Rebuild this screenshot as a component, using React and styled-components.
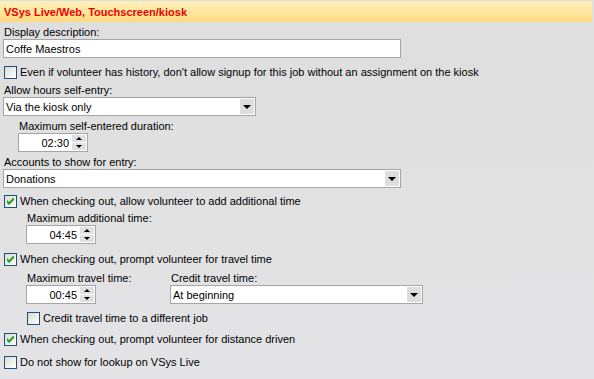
import React from 'react'
import styled, { createGlobalStyle } from 'styled-components'

const Global = createGlobalStyle`
  html, body {
    margin: 0;
    padding: 0;
  }
  body {
    width: 594px;
    height: 379px;
    overflow: hidden;
    font-family: "Liberation Sans", Arial, sans-serif;
    font-size: 11px;
    color: #000;
    background: linear-gradient(180deg, #dedede 0%, #e4e4e6 100%);
  }
`

const Panel = styled.div`
  display: flex;
  flex-direction: column;
  width: 594px;
  height: 379px;
`

const Header = styled.div`
  margin-top: 1px;
  width: 592px;
  height: 21px;
  display: flex;
  align-items: center;
  padding-left: 4px;
  box-sizing: border-box;
  background: linear-gradient(180deg, #fff0bc 0%, #ffe7a0 50%, #ffd97c 100%);
  color: #ee0000;
  font-weight: bold;
  font-size: 11px;
`

const Body = styled.div`
  display: flex;
  flex-direction: column;
  padding-left: 3px;
`

const Label = styled.div`
  height: 13px;
  line-height: 13px;
  margin-top: ${({ $top }) => $top || 0}px;
  margin-left: ${({ $indent }) => ($indent || 0) + 1}px;
`

const TextBox = styled.div`
  width: ${({ $w }) => $w}px;
  height: 19px;
  box-sizing: border-box;
  border: 1px solid #a5a5a5;
  background: #fff;
  display: flex;
  align-items: center;
  padding-left: 2px;
`

const Select = styled.div`
  width: ${({ $w }) => $w}px;
  height: 19px;
  box-sizing: border-box;
  border: 1px solid #a5a5a5;
  background: #fff;
  display: flex;
  align-items: center;
  justify-content: space-between;
  padding: 1px;
  padding-left: 2px;
`

const DropBtn = styled.div`
  width: 14px;
  height: 15px;
  background: #dedede;
  display: flex;
  align-items: center;
  justify-content: center;
`

const Arrow = styled.div`
  width: 0;
  height: 0;
  border-left: 4px solid transparent;
  border-right: 4px solid transparent;
  border-${({ $up }) => ($up ? 'bottom' : 'top')}: 4px solid #000;
`

const Spin = styled.div`
  width: 70px;
  height: 19px;
  box-sizing: border-box;
  border: 1px solid #a5a5a5;
  background: #fff;
  display: flex;
  align-items: center;
  margin-left: ${({ $indent }) => $indent || 0}px;
`

const SpinValue = styled.div`
  flex: 1;
  text-align: right;
  padding-right: 3px;
`

const SpinBtns = styled.div`
  width: 14px;
  height: 15px;
  display: flex;
  flex-direction: column;
  gap: 1px;
  margin-right: 1px;
`

const SpinBtn = styled.div`
  flex: 1;
  background: #e0e0e0;
  display: flex;
  align-items: center;
  justify-content: center;
  ${Arrow} {
    border-left-width: 3px;
    border-right-width: 3px;
    border-top-width: 3px;
    border-bottom-width: 3px;
  }
`

const CheckRow = styled.label`
  display: flex;
  align-items: center;
  height: 14px;
  margin-top: ${({ $top }) => $top || 0}px;
  margin-left: ${({ $indent }) => ($indent || 0) + 1}px;
`

const Box = styled.span`
  width: 13px;
  height: 13px;
  box-sizing: border-box;
  border: 1px solid #1c5180;
  background: linear-gradient(135deg, #dcdcd6 0%, #f4f4f0 70%, #ffffff 100%);
  display: flex;
  align-items: center;
  justify-content: center;
  margin-right: 3px;
  flex-shrink: 0;
`

const Columns = styled.div`
  display: flex;
  margin-left: 23px;
  margin-top: 6px;
`

const Column = styled.div`
  display: flex;
  flex-direction: column;
  width: ${({ $w }) => $w}px;
`

const Check = ({ checked, children, top, indent }) => (
  <CheckRow $top={top} $indent={indent}>
    <Box>
      {checked && (
        <svg width="7" height="7" viewBox="0 0 7 7">
          <path d="M0 2 L2 4 L7 -1 L7 2 L2 7 L0 5 Z" fill="#21a121" />
        </svg>
      )}
    </Box>
    {children}
  </CheckRow>
)

const Dropdown = ({ w, value }) => (
  <Select $w={w}>
    <span>{value}</span>
    <DropBtn>
      <Arrow />
    </DropBtn>
  </Select>
)

const TimeSpin = ({ value, indent }) => (
  <Spin $indent={indent}>
    <SpinValue>{value}</SpinValue>
    <SpinBtns>
      <SpinBtn><Arrow $up /></SpinBtn>
      <SpinBtn><Arrow /></SpinBtn>
    </SpinBtns>
  </Spin>
)

export default function App() {
  return (
    <Panel>
      <Global />
      <Header>VSys Live/Web, Touchscreen/kiosk</Header>
      <Body>
        <Label $top={4}>Display description:</Label>
        <TextBox $w={398}>Coffe Maestros</TextBox>
        <Check top={7}>Even if volunteer has history, don't allow signup for this job without an assignment on the kiosk</Check>
        <Label $top={5}>Allow hours self-entry:</Label>
        <Dropdown w={253} value="Via the kiosk only" />
        <Label $top={4} $indent={15}>Maximum self-entered duration:</Label>
        <TimeSpin indent={15} value="02:30" />
        <Label $top={4}>Accounts to show for entry:</Label>
        <Dropdown w={398} value="Donations" />
        <Check top={6} checked>When checking out, allow volunteer to add additional time</Check>
        <Label $top={4} $indent={23}>Maximum additional time:</Label>
        <TimeSpin indent={23} value="04:45" />
        <Check top={8} checked>When checking out, prompt volunteer for travel time</Check>
        <Columns>
          <Column $w={144}>
            <Label>Maximum travel time:</Label>
            <TimeSpin value="00:45" />
          </Column>
          <Column $w={253}>
            <Label>Credit travel time:</Label>
            <Dropdown w={253} value="At beginning" />
          </Column>
        </Columns>
        <Check top={7} indent={23}>Credit travel time to a different job</Check>
        <Check top={7} checked>When checking out, prompt volunteer for distance driven</Check>
        <Check top={9}>Do not show for lookup on VSys Live</Check>
      </Body>
    </Panel>
  )
}
